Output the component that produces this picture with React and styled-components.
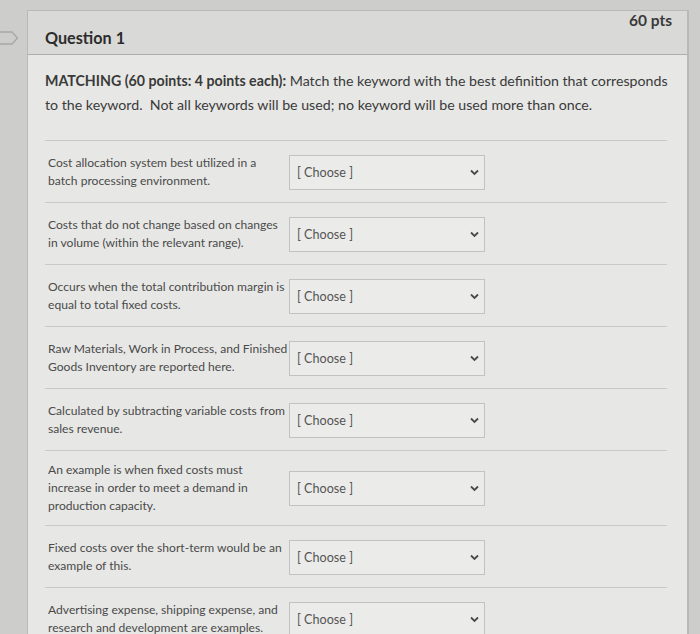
import React from "react";
import styled, { createGlobalStyle } from "styled-components";

const Global = createGlobalStyle`
  html, body { margin: 0; padding: 0; }
  body {
    background: #cdcdcb;
    font-family: Lato, "Open Sans", "Liberation Sans", sans-serif;
    color: #3b3b3b;
    overflow: hidden;
  }
`;

const Page = styled.div`
  display: flex;
  align-items: flex-start;
  height: 634px;
  padding-top: 10px;
  box-sizing: border-box;
`;

const Gutter = styled.div`
  width: 27px;
  flex: none;
  padding-top: 21px;
  display: flex;
  justify-content: flex-start;
`;

const Card = styled.div`
  width: 662px;
  flex: none;
  background: #e7e7e5;
  border: 1px solid #b9b9b7;
  border-right-width: 2px;
  min-height: 640px;
  box-sizing: border-box;
`;

const Header = styled.div`
  height: 43px;
  background: #d9d9d7;
  border-bottom: 1px solid #aeaeac;
  display: flex;
  justify-content: space-between;
  padding: 0 15px 0 17px;
`;

const Title = styled.h2`
  margin: 0;
  align-self: flex-end;
  padding-bottom: 7px;
  font-size: 16.2px;
  font-weight: 700;
  color: #2c2c2c;
`;

const Points = styled.div`
  align-self: flex-start;
  font-size: 15.5px;
  font-weight: 700;
  color: #3a3a3a;
`;

const Body = styled.div`
  padding: 14px 14px 0 17px;
`;

const Intro = styled.p`
  margin: 0 0 23px;
  font-size: 14.2px;
  line-height: 24px;
  color: #3a3a3a;
  strong { font-weight: 700; }
`;

const List = styled.div`
  display: flex;
  flex-direction: column;
  margin-right: 6px;
`;

const Row = styled.div`
  display: flex;
  align-items: center;
  border-top: 1px solid #c9c9c7;
  padding: ${(p) => (p.$tall ? "10px 0 10px 3px" : "13px 0 12px 3px")};
  min-height: 36px;
`;

const Prompt = styled.div`
  width: 240px;
  flex: none;
  font-size: 12.1px;
  line-height: 18px;
  color: #4a4a4a;
`;

const Select = styled.div`
  width: 196px;
  height: 35px;
  flex: none;
  margin-left: 1px;
  box-sizing: border-box;
  border: 1px solid #c2c2c0;
  background: #ebebe9;
  display: flex;
  align-items: center;
  justify-content: space-between;
  padding: 0 5px 0 7px;
  font-size: 12.6px;
  color: #555;
`;

const Chevron = () => (
  <svg width="9" height="7" viewBox="0 0 9 7" aria-hidden="true">
    <path d="M1 1.5 L4.5 5 L8 1.5" fill="none" stroke="#4a4a4a" strokeWidth="1.8" />
  </svg>
);

const Flag = () => (
  <svg width="19" height="14" viewBox="0 0 19 14" aria-hidden="true">
    <path d="M-2 1 H12 L17.5 7 L12 13 H-2" fill="none" stroke="#a8a8a6" strokeWidth="1.4" />
  </svg>
);

const items = [
  "Cost allocation system best utilized in a batch processing environment.",
  "Costs that do not change based on changes in volume (within the relevant range).",
  "Occurs when the total contribution margin is equal to total fixed costs.",
  "Raw Materials, Work in Process, and Finished Goods Inventory are reported here.",
  "Calculated by subtracting variable costs from sales revenue.",
  "An example is when fixed costs must increase in order to meet a demand in production capacity.",
  "Fixed costs over the short-term would be an example of this.",
  "Advertising expense, shipping expense, and research and development are examples.",
];

export default function App() {
  return (
    <>
      <Global />
      <Page>
        <Gutter>
          <Flag />
        </Gutter>
        <Card>
          <Header>
            <Title>Question 1</Title>
            <Points>60 pts</Points>
          </Header>
          <Body>
            <Intro>
              <strong>MATCHING (60 points: 4 points each):</strong> Match the keyword with the best
              definition that corresponds to the keyword.&nbsp; Not all keywords will be used; no
              keyword will be used more than once.
            </Intro>
            <List>
              {items.map((t, i) => (
                <Row key={i} $tall={i === 5}>
                  <Prompt>{t}</Prompt>
                  <Select>
                    <span>[ Choose ]</span>
                    <Chevron />
                  </Select>
                </Row>
              ))}
            </List>
          </Body>
        </Card>
      </Page>
    </>
  );
}
